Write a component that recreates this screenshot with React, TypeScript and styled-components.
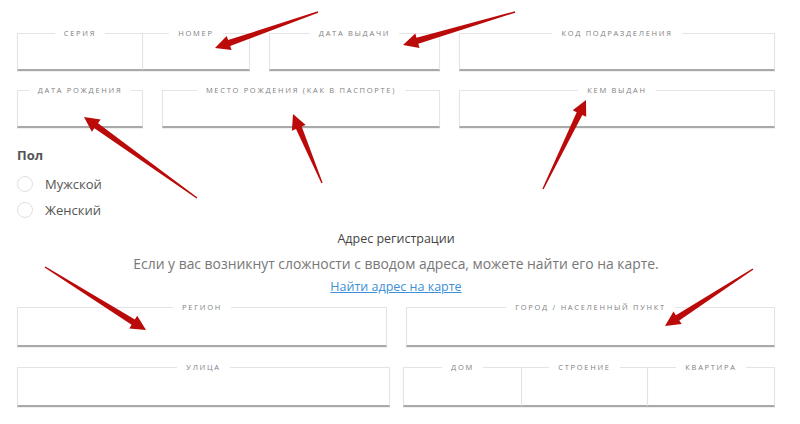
import styled, { createGlobalStyle } from "styled-components";

const Global = createGlobalStyle`
  html, body {
    margin: 0;
    padding: 0;
    background: #fff;
  }
  body {
    font-family: "Open Sans", "Noto Sans", sans-serif;
    color: #555;
  }
`;

const Page = styled.div`
  position: relative;
  width: 800px;
  height: 424px;
  box-sizing: border-box;
  padding: 28px 25px 0 17px;
  overflow: hidden;
`;

const Row = styled.div<{ $gap?: number; $top?: number }>`
  display: flex;
  gap: ${(p) => p.$gap ?? 19}px;
  margin-top: ${(p) => p.$top ?? 0}px;
`;

const Group = styled.div<{ $w: number }>`
  display: flex;
  width: ${(p) => p.$w}px;
  & > fieldset + fieldset {
    border-left: none;
  }
`;

const Field = styled.fieldset<{ $w?: number }>`
  margin: 0;
  padding: 0;
  min-width: 0;
  box-sizing: border-box;
  width: ${(p) => (p.$w ? `${p.$w}px` : "auto")};
  flex: ${(p) => (p.$w ? "none" : "1")};
  border: 1px solid #e4e4e4;
  border-bottom: 2px solid #a9a9a9;
  box-shadow: 0 1px 1px rgba(0, 0, 0, 0.06);
`;

const Legend = styled.legend`
  margin: 0 auto;
  padding: 0 9px;
  font-size: 7.5px;
  line-height: 10px;
  letter-spacing: 1.7px;
  text-transform: uppercase;
  color: #808080;
`;

const Inner = styled.div<{ $h: number }>`
  height: ${(p) => p.$h}px;
`;

const SectionTitle = styled.div`
  margin-top: 18px;
  font-size: 13px;
  line-height: 18px;
  font-weight: 700;
  color: #555;
`;

const RadioList = styled.div`
  margin-top: 7px;
  display: flex;
  flex-direction: column;
`;

const RadioRow = styled.label`
  display: flex;
  align-items: center;
  height: 26px;
  gap: 12px;
  font-size: 13px;
  color: #555;
`;

const Circle = styled.span`
  width: 16px;
  height: 16px;
  border: 1px solid #e0e0e0;
  border-radius: 50%;
  box-sizing: border-box;
  flex: none;
`;

const Address = styled.div`
  margin-top: 6px;
  text-align: center;
`;

const AddressTitle = styled.div`
  font-size: 12.5px;
  line-height: 20px;
  color: #444;
`;

const Hint = styled.div`
  margin-top: 5px;
  font-size: 13.9px;
  line-height: 20px;
  color: #777;
`;

const MapLink = styled.a`
  display: inline-block;
  font-size: 12.5px;
  line-height: 18px;
  color: #3d8fd6;
  text-decoration: underline;
`;

const Overlay = styled.svg`
  position: absolute;
  left: 0;
  top: 0;
  pointer-events: none;
`;

type FieldProps = { label: string; w?: number; h?: number };

const InputBox = ({ label, w, h = 31 }: FieldProps) => (
  <Field $w={w}>
    <Legend>{label}</Legend>
    <Inner $h={h} />
  </Field>
);

const arrows: [number, number, number, number][] = [
  [318, 12, 215, 48],
  [515, 12, 403, 45],
  [197, 198, 84, 117],
  [322, 183, 293, 114],
  [543, 189, 586, 100],
  [45, 267, 146, 330],
  [753, 269, 665, 326],
];

function arrowPoints(x1: number, y1: number, x2: number, y2: number) {
  const dx = x2 - x1;
  const dy = y2 - y1;
  const len = Math.hypot(dx, dy);
  const ux = dx / len;
  const uy = dy / len;
  const nx = -uy;
  const ny = ux;
  const head = 15;
  const bx = x2 - ux * head;
  const by = y2 - uy * head;
  const pts = [
    [x1 + nx * 0.7, y1 + ny * 0.7],
    [bx + nx * 3.1, by + ny * 3.1],
    [bx + nx * 7.5, by + ny * 7.5],
    [x2, y2],
    [bx - nx * 7.5, by - ny * 7.5],
    [bx - nx * 3.1, by - ny * 3.1],
    [x1 - nx * 0.7, y1 - ny * 0.7],
  ];
  return pts.map((p) => p.map((v) => v.toFixed(1)).join(",")).join(" ");
}

const App = () => {
  return (
    <>
      <Global />
      <Page>
        <Row>
          <Group $w={233}>
            <InputBox label="Серия" w={126} />
            <InputBox label="Номер" />
          </Group>
          <InputBox label="Дата выдачи" w={171} />
          <InputBox label="Код подразделения" />
        </Row>
        <Row $top={14}>
          <InputBox label="Дата рождения" w={126} />
          <InputBox label="Место рождения (как в паспорте)" w={278} />
          <InputBox label="Кем выдан" />
        </Row>

        <SectionTitle>Пол</SectionTitle>
        <RadioList>
          <RadioRow>
            <Circle />
            Мужской
          </RadioRow>
          <RadioRow>
            <Circle />
            Женский
          </RadioRow>
        </RadioList>

        <Address>
          <AddressTitle>Адрес регистрации</AddressTitle>
          <Hint>Если у вас возникнут сложности с вводом адреса, можете найти его на карте.</Hint>
          <MapLink href="#">Найти адрес на карте</MapLink>
        </Address>

        <Row $top={6}>
          <InputBox label="Регион" w={370} h={33} />
          <InputBox label="Город / населенный пункт" h={33} />
        </Row>
        <Row $gap={13} $top={15}>
          <InputBox label="Улица" w={373} h={33} />
          <Group $w={372}>
            <InputBox label="Дом" w={119} h={33} />
            <InputBox label="Строение" w={126} h={33} />
            <InputBox label="Квартира" h={33} />
          </Group>
        </Row>

        <Overlay width={800} height={424} viewBox="0 0 800 424">
          {arrows.map(([x1, y1, x2, y2], i) => (
            <polygon key={i} points={arrowPoints(x1, y1, x2, y2)} fill="#bb0a0a" />
          ))}
        </Overlay>
      </Page>
    </>
  );
};

export default App;
